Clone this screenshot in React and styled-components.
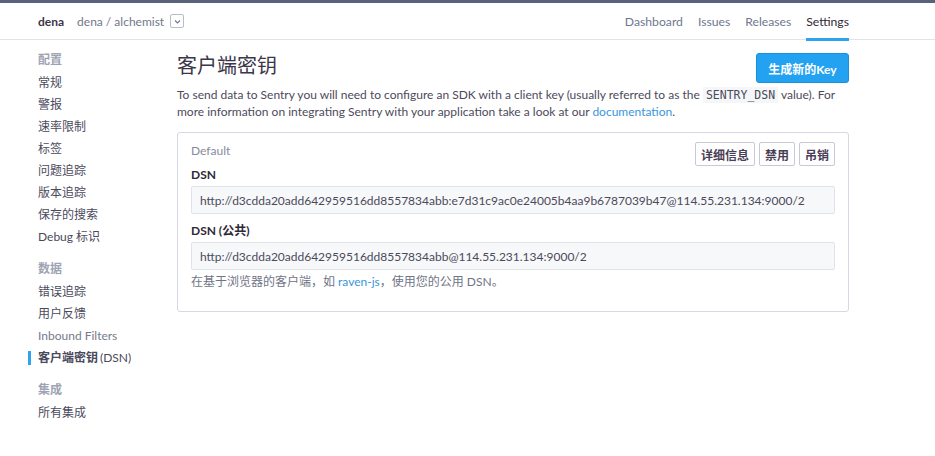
import React from "react";
import styled, { createGlobalStyle } from "styled-components";

const GlobalStyle = createGlobalStyle`
  html, body {
    margin: 0;
    padding: 0;
    background: #fff;
  }
  body {
    font-family: Lato, "Noto Sans CJK SC", sans-serif;
    color: #493e54;
    font-size: 12px;
  }
`;

const Header = styled.div`
  height: 36px;
  border-top: 3px solid #58627a;
  border-bottom: 1px solid #e2e3ea;
  display: flex;
  align-items: center;
  justify-content: space-between;
  padding: 0 86px 0 38px;
`;

const Crumbs = styled.div`
  display: flex;
  align-items: center;
`;

const Org = styled.span`
  font-weight: bold;
  color: #3b3648;
  margin-right: 13px;
`;

const Project = styled.span`
  color: #71778a;
  margin-right: 6px;
`;

const DropBox = styled.span`
  width: 12px;
  height: 12px;
  border: 1px solid #b8bcc9;
  border-radius: 2px;
  display: inline-flex;
  align-items: center;
  justify-content: center;
`;

const Nav = styled.div`
  display: flex;
  align-self: stretch;
  gap: 15px;
`;

const NavItem = styled.a`
  display: flex;
  align-items: center;
  color: ${(p) => (p.active ? "#2f2936" : "#6f7790")};
  border-bottom: 3px solid ${(p) => (p.active ? "#2ea3f2" : "transparent")};
  margin-bottom: -2px;
  padding-top: 1px;
  text-decoration: none;
  font-size: 12.2px;
`;

const Body = styled.div`
  display: flex;
  padding-left: 38px;
`;

const Sidebar = styled.div`
  width: 139px;
  padding-top: 9px;
`;

const SideHeading = styled.div`
  color: #9ea3b3;
  font-weight: bold;
  line-height: 22px;
  margin-top: ${(p) => (p.first ? "0" : "10px")};
  margin-bottom: 1px;
`;

const SideItem = styled.div`
  position: relative;
  line-height: 22px;
  color: ${(p) => (p.muted ? "#767a8c" : "#4b4a5c")};
  font-weight: ${(p) => (p.active ? "bold" : "normal")};
  span {
    font-weight: normal;
    margin-left: 2px;
  }
  &::before {
    content: "";
    display: ${(p) => (p.active ? "block" : "none")};
    position: absolute;
    left: -10px;
    top: 4px;
    width: 3px;
    height: 14px;
    background: #2ea3f2;
  }
`;

const Main = styled.div`
  width: 672px;
  padding-top: 13px;
`;

const TitleRow = styled.div`
  display: flex;
  justify-content: space-between;
  align-items: flex-start;
`;

const Title = styled.h2`
  margin: 0;
  font-size: 20px;
  font-weight: normal;
  line-height: 24px;
  color: #3b3648;
`;

const PrimaryButton = styled.button`
  height: 30px;
  width: 93px;
  background: #23a2f2;
  border: 1px solid #1b8fd9;
  border-radius: 3px;
  color: #fff;
  font-family: inherit;
  font-size: 12px;
  font-weight: bold;
  padding: 0;
`;

const Intro = styled.p`
  margin: 3px 0 12px;
  line-height: 17px;
  color: #4d4a5c;
`;

const Code = styled.code`
  font-family: "DejaVu Sans Mono", monospace;
  font-size: 11.5px;
  line-height: 14px;
  background: #f5f6f8;
  padding: 1px 3px;
  color: #4a4a5a;
`;

const Link = styled.a`
  color: #3a95dc;
  text-decoration: none;
`;

const Panel = styled.div`
  border: 1px solid #d6d9e3;
  border-radius: 3px;
  padding: 9px 13px 20px;
`;

const PanelHead = styled.div`
  display: flex;
  justify-content: space-between;
  align-items: flex-start;
`;

const KeyName = styled.div`
  color: #868b9c;
  line-height: 18px;
`;

const Actions = styled.div`
  display: flex;
  gap: 4px;
`;

const SmallButton = styled.button`
  height: 24px;
  padding: 0 5px;
  background: #fff;
  border: 1px solid #c7cad6;
  border-radius: 2px;
  font-family: inherit;
  font-size: 12px;
  font-weight: bold;
  color: #493e54;
`;

const Label = styled.div`
  font-weight: bold;
  line-height: 18px;
  color: #2f2936;
  margin-top: ${(p) => (p.spaced ? "8px" : "0")};
`;

const Field = styled.div`
  margin-top: 2px;
  height: 26px;
  border: 1px solid #e0e2e9;
  border-radius: 2px;
  background: #f7f8f9;
  padding: 0 8px;
  display: flex;
  align-items: center;
  color: #4b4a5c;
`;

const Help = styled.div`
  margin-top: 3px;
  line-height: 18px;
  color: #6f7486;
`;

const sections = [
  {
    title: "配置",
    items: ["常规", "警报", "速率限制", "标签", "问题追踪", "版本追踪", "保存的搜索", "Debug 标识"],
  },
  { title: "数据", items: ["错误追踪", "用户反馈", "Inbound Filters", "客户端密钥"] },
  { title: "集成", items: ["所有集成"] },
];

const App = () => {
  return (
    <>
      <GlobalStyle />
      <Header>
        <Crumbs>
          <Org>dena</Org>
          <Project>dena / alchemist</Project>
          <DropBox>
            <svg width="9" height="9" viewBox="0 0 9 9">
              <path d="M2 3.5 L4.5 6 L7 3.5" fill="none" stroke="#6f7790" strokeWidth="1.1" />
            </svg>
          </DropBox>
        </Crumbs>
        <Nav>
          <NavItem>Dashboard</NavItem>
          <NavItem>Issues</NavItem>
          <NavItem>Releases</NavItem>
          <NavItem active>Settings</NavItem>
        </Nav>
      </Header>
      <Body>
        <Sidebar>
          {sections.map((s, i) => (
            <div key={s.title}>
              <SideHeading first={i === 0}>{s.title}</SideHeading>
              {s.items.map((it) =>
                it === "客户端密钥" ? (
                  <SideItem key={it} active>
                    客户端密钥<span>(DSN)</span>
                  </SideItem>
                ) : (
                  <SideItem key={it} muted={it === "Inbound Filters"}>
                    {it}
                  </SideItem>
                )
              )}
            </div>
          ))}
        </Sidebar>
        <Main>
          <TitleRow>
            <Title>客户端密钥</Title>
            <PrimaryButton>生成新的Key</PrimaryButton>
          </TitleRow>
          <Intro>
            To send data to Sentry you will need to configure an SDK with a client key (usually referred to as the{" "}
            <Code>SENTRY_DSN</Code> value). For more information on integrating Sentry with your application take a
            look at our <Link>documentation</Link>.
          </Intro>
          <Panel>
            <PanelHead>
              <KeyName>Default</KeyName>
              <Actions>
                <SmallButton>详细信息</SmallButton>
                <SmallButton>禁用</SmallButton>
                <SmallButton>吊销</SmallButton>
              </Actions>
            </PanelHead>
            <Label>DSN</Label>
            <Field>
              http://d3cdda20add642959516dd8557834abb:e7d31c9ac0e24005b4aa9b6787039b47@114.55.231.134:9000/2
            </Field>
            <Label spaced>DSN (公共)</Label>
            <Field>http://d3cdda20add642959516dd8557834abb@114.55.231.134:9000/2</Field>
            <Help>
              在基于浏览器的客户端，如 <Link>raven-js</Link>，使用您的公用 DSN。
            </Help>
          </Panel>
        </Main>
      </Body>
    </>
  );
};

export default App;
